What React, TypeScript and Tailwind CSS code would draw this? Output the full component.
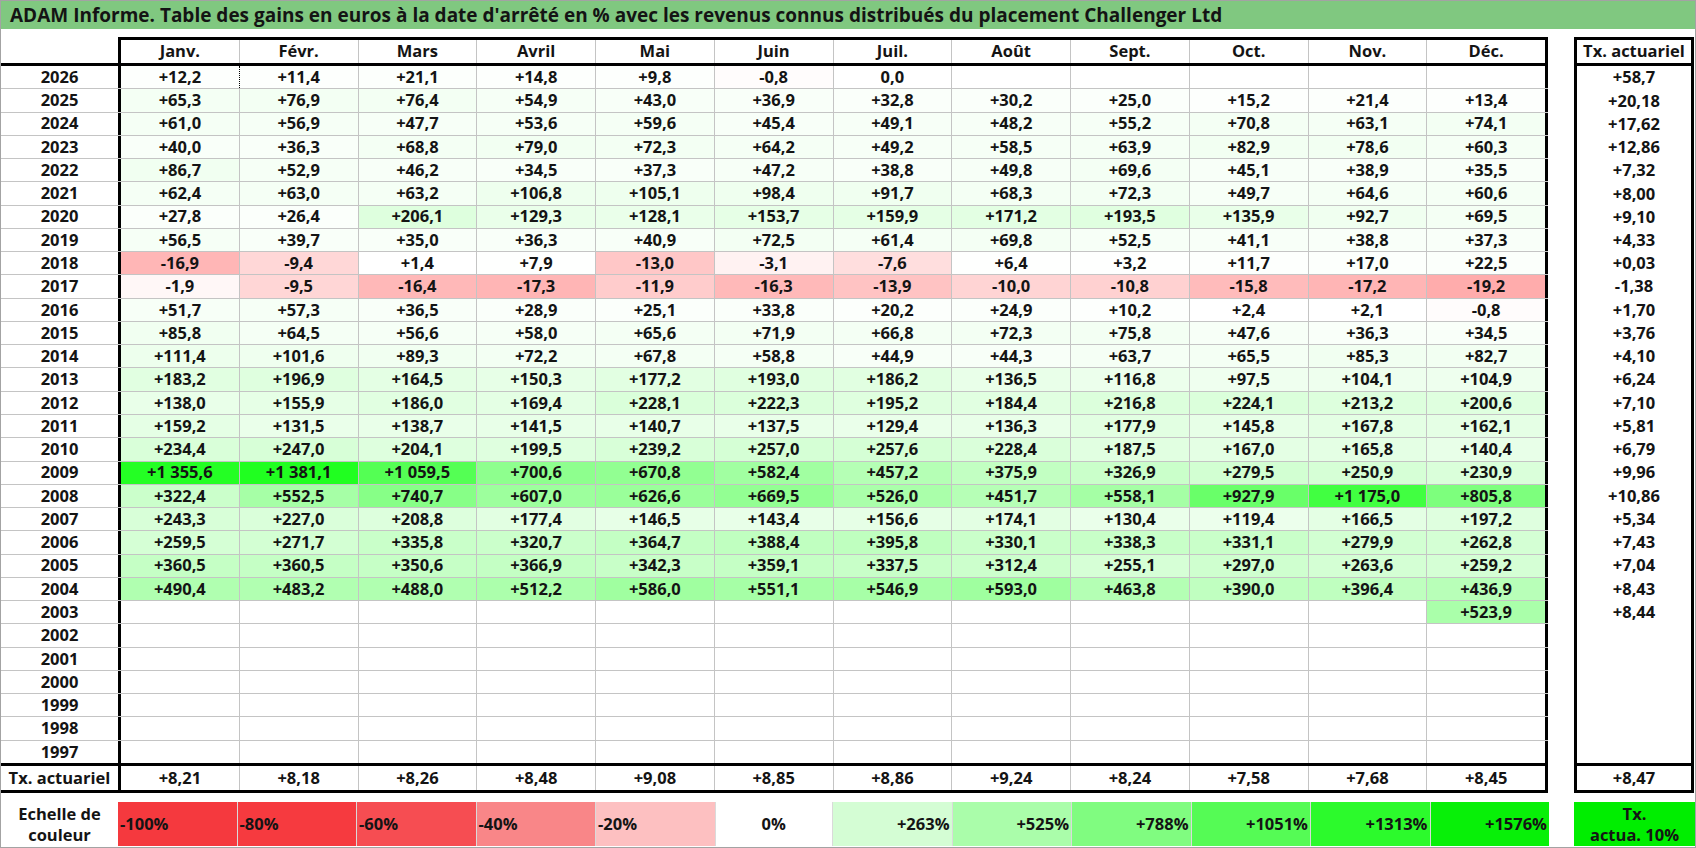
import React from "react";

type Row = [string, (string | null)[], string];

const months = ["Janv.", "Févr.", "Mars", "Avril", "Mai", "Juin", "Juil.", "Août", "Sept.", "Oct.", "Nov.", "Déc."];

const E = null;
const rows: Row[] = [
  ["2026", ["+12,2", "+11,4", "+21,1", "+14,8", "+9,8", "-0,8", "0,0", E, E, E, E, E], "+58,7"],
  ["2025", ["+65,3", "+76,9", "+76,4", "+54,9", "+43,0", "+36,9", "+32,8", "+30,2", "+25,0", "+15,2", "+21,4", "+13,4"], "+20,18"],
  ["2024", ["+61,0", "+56,9", "+47,7", "+53,6", "+59,6", "+45,4", "+49,1", "+48,2", "+55,2", "+70,8", "+63,1", "+74,1"], "+17,62"],
  ["2023", ["+40,0", "+36,3", "+68,8", "+79,0", "+72,3", "+64,2", "+49,2", "+58,5", "+63,9", "+82,9", "+78,6", "+60,3"], "+12,86"],
  ["2022", ["+86,7", "+52,9", "+46,2", "+34,5", "+37,3", "+47,2", "+38,8", "+49,8", "+69,6", "+45,1", "+38,9", "+35,5"], "+7,32"],
  ["2021", ["+62,4", "+63,0", "+63,2", "+106,8", "+105,1", "+98,4", "+91,7", "+68,3", "+72,3", "+49,7", "+64,6", "+60,6"], "+8,00"],
  ["2020", ["+27,8", "+26,4", "+206,1", "+129,3", "+128,1", "+153,7", "+159,9", "+171,2", "+193,5", "+135,9", "+92,7", "+69,5"], "+9,10"],
  ["2019", ["+56,5", "+39,7", "+35,0", "+36,3", "+40,9", "+72,5", "+61,4", "+69,8", "+52,5", "+41,1", "+38,8", "+37,3"], "+4,33"],
  ["2018", ["-16,9", "-9,4", "+1,4", "+7,9", "-13,0", "-3,1", "-7,6", "+6,4", "+3,2", "+11,7", "+17,0", "+22,5"], "+0,03"],
  ["2017", ["-1,9", "-9,5", "-16,4", "-17,3", "-11,9", "-16,3", "-13,9", "-10,0", "-10,8", "-15,8", "-17,2", "-19,2"], "-1,38"],
  ["2016", ["+51,7", "+57,3", "+36,5", "+28,9", "+25,1", "+33,8", "+20,2", "+24,9", "+10,2", "+2,4", "+2,1", "-0,8"], "+1,70"],
  ["2015", ["+85,8", "+64,5", "+56,6", "+58,0", "+65,6", "+71,9", "+66,8", "+72,3", "+75,8", "+47,6", "+36,3", "+34,5"], "+3,76"],
  ["2014", ["+111,4", "+101,6", "+89,3", "+72,2", "+67,8", "+58,8", "+44,9", "+44,3", "+63,7", "+65,5", "+85,3", "+82,7"], "+4,10"],
  ["2013", ["+183,2", "+196,9", "+164,5", "+150,3", "+177,2", "+193,0", "+186,2", "+136,5", "+116,8", "+97,5", "+104,1", "+104,9"], "+6,24"],
  ["2012", ["+138,0", "+155,9", "+186,0", "+169,4", "+228,1", "+222,3", "+195,2", "+184,4", "+216,8", "+224,1", "+213,2", "+200,6"], "+7,10"],
  ["2011", ["+159,2", "+131,5", "+138,7", "+141,5", "+140,7", "+137,5", "+129,4", "+136,3", "+177,9", "+145,8", "+167,8", "+162,1"], "+5,81"],
  ["2010", ["+234,4", "+247,0", "+204,1", "+199,5", "+239,2", "+257,0", "+257,6", "+228,4", "+187,5", "+167,0", "+165,8", "+140,4"], "+6,79"],
  ["2009", ["+1 355,6", "+1 381,1", "+1 059,5", "+700,6", "+670,8", "+582,4", "+457,2", "+375,9", "+326,9", "+279,5", "+250,9", "+230,9"], "+9,96"],
  ["2008", ["+322,4", "+552,5", "+740,7", "+607,0", "+626,6", "+669,5", "+526,0", "+451,7", "+558,1", "+927,9", "+1 175,0", "+805,8"], "+10,86"],
  ["2007", ["+243,3", "+227,0", "+208,8", "+177,4", "+146,5", "+143,4", "+156,6", "+174,1", "+130,4", "+119,4", "+166,5", "+197,2"], "+5,34"],
  ["2006", ["+259,5", "+271,7", "+335,8", "+320,7", "+364,7", "+388,4", "+395,8", "+330,1", "+338,3", "+331,1", "+279,9", "+262,8"], "+7,43"],
  ["2005", ["+360,5", "+360,5", "+350,6", "+366,9", "+342,3", "+359,1", "+337,5", "+312,4", "+255,1", "+297,0", "+263,6", "+259,2"], "+7,04"],
  ["2004", ["+490,4", "+483,2", "+488,0", "+512,2", "+586,0", "+551,1", "+546,9", "+593,0", "+463,8", "+390,0", "+396,4", "+436,9"], "+8,43"],
  ["2003", [E, E, E, E, E, E, E, E, E, E, E, "+523,9"], "+8,44"],
  ["2002", [E, E, E, E, E, E, E, E, E, E, E, E], ""],
  ["2001", [E, E, E, E, E, E, E, E, E, E, E, E], ""],
  ["2000", [E, E, E, E, E, E, E, E, E, E, E, E], ""],
  ["1999", [E, E, E, E, E, E, E, E, E, E, E, E], ""],
  ["1998", [E, E, E, E, E, E, E, E, E, E, E, E], ""],
  ["1997", [E, E, E, E, E, E, E, E, E, E, E, E], ""],
];

const txRow = ["+8,21", "+8,18", "+8,26", "+8,48", "+9,08", "+8,85", "+8,86", "+9,24", "+8,24", "+7,58", "+7,68", "+8,45"];

const legend: { label: string; bg: string; align: string }[] = [
  { label: "-100%", bg: "#f5393e", align: "justify-start pl-[2px]" },
  { label: "-80%", bg: "#f63a3f", align: "justify-start pl-[2px]" },
  { label: "-60%", bg: "#f64d52", align: "justify-start pl-[2px]" },
  { label: "-40%", bg: "#f98688", align: "justify-start pl-[2px]" },
  { label: "-20%", bg: "#fdc0c1", align: "justify-start pl-[2px]" },
  { label: "0%", bg: "#ffffff", align: "justify-center" },
  { label: "+263%", bg: "#d4fdd4", align: "justify-end pr-[2px]" },
  { label: "+525%", bg: "#aafdaa", align: "justify-end pr-[2px]" },
  { label: "+788%", bg: "#80fc80", align: "justify-end pr-[2px]" },
  { label: "+1051%", bg: "#55fb55", align: "justify-end pr-[2px]" },
  { label: "+1313%", bg: "#2cfa2c", align: "justify-end pr-[2px]" },
  { label: "+1576%", bg: "#08f008", align: "justify-end pr-[2px]" },
];

function cellBg(s: string | null): string | undefined {
  if (!s) return undefined;
  const v = parseFloat(s.replace(/\s/g, "").replace(",", "."));
  if (v > 0) {
    const t = Math.min(1, v / 1576);
    const c = Math.round(255 * (1 - t));
    return `rgb(${c},255,${c})`;
  }
  if (v < 0) {
    const c = Math.round(255 - Math.min(255, -v * 4.3));
    return `rgb(255,${c},${c})`;
  }
  return undefined;
}

export default function App() {
  return (
    <div className="w-[1696px] h-[848px] bg-white border border-[#a3a3a3] overflow-hidden font-bold text-[#141414] [font-family:'Open_Sans',sans-serif]">
      <div className="h-[28px] bg-[#80c880] flex items-center pl-[9px] text-[19px] leading-none whitespace-nowrap">
        ADAM Informe. Table des gains en euros à la date d'arrêté en % avec les revenus connus distribués du placement Challenger Ltd
      </div>

      <div className="mt-[8px] flex text-[16.5px] leading-none">
        {/* Main table */}
        <div className="w-[1547px] flex flex-col">
          {/* header */}
          <div className="h-[29px] flex border-b-[3px] border-black">
            <div className="w-[117px]" />
            <div className="flex-1 flex border-t-[3px] border-x-[3px] border-black">
              {months.map((m, i) => (
                <div
                  key={m}
                  className={`flex-1 basis-0 flex items-center justify-center ${i < 11 ? "border-r border-[#c4c4c4]" : ""}`}
                >
                  {m}
                </div>
              ))}
            </div>
          </div>
          {/* data */}
          <div className="h-[700px] flex flex-col border-b-[3px] border-black">
            {rows.map(([year, vals], ri) => (
              <div
                key={year}
                className={`flex-1 min-h-0 flex ${ri < rows.length - 1 ? "border-b border-[#c4c4c4]" : ""}`}
              >
                <div className="w-[117px] flex items-center justify-center">{year}</div>
                <div className="flex-1 flex border-x-[3px] border-black">
                  {vals.map((v, i) => {
                    const dotted = ri === 0 && i === 0;
                    return (
                      <div
                        key={i}
                        className={`flex-1 basis-0 flex items-center justify-center ${
                          i < 11 ? (dotted ? "border-r border-dotted border-black" : "border-r border-[#c4c4c4]") : ""
                        }`}
                        style={{ backgroundColor: cellBg(v) }}
                      >
                        {v ?? ""}
                      </div>
                    );
                  })}
                </div>
              </div>
            ))}
          </div>
          {/* tx row */}
          <div className="h-[27px] flex border-b-[3px] border-black">
            <div className="w-[117px] flex items-center justify-center whitespace-nowrap">Tx. actuariel</div>
            <div className="flex-1 flex border-x-[3px] border-black">
              {txRow.map((v, i) => (
                <div
                  key={i}
                  className={`flex-1 basis-0 flex items-center justify-center ${i < 11 ? "border-r border-[#c4c4c4]" : ""}`}
                >
                  {v}
                </div>
              ))}
            </div>
          </div>
        </div>

        {/* Tx actuariel box */}
        <div className="ml-[26px] w-[120px] h-[756px] border-[3px] border-black flex flex-col">
          <div className="h-[26px] shrink-0 border-b-[3px] border-black flex items-center justify-center whitespace-nowrap">
            Tx. actuariel
          </div>
          <div className="h-[697px] shrink-0 flex flex-col">
            {rows.map(([year, , tx]) => (
              <div key={year} className="flex-1 min-h-0 flex items-center justify-center">
                {tx}
              </div>
            ))}
          </div>
          <div className="h-[27px] shrink-0 border-t-[3px] border-black flex items-center justify-center">+8,47</div>
        </div>
      </div>

      {/* legend */}
      <div className="mt-[9px] h-[44px] flex text-[16.5px] leading-none">
        <div className="w-[117px] flex flex-col items-center justify-center leading-[21px]">
          <span>Echelle de</span>
          <span>couleur</span>
        </div>
        <div className="w-[1431px] flex">
          {legend.map((l, i) => (
            <div
              key={l.label}
              className={`flex-1 basis-0 flex items-center ${l.align} ${i < 11 ? "border-r border-[#dadada]" : ""}`}
              style={{ backgroundColor: l.bg }}
            >
              {l.label}
            </div>
          ))}
        </div>
        <div className="ml-[25px] w-[121px] bg-[#00ee00] flex flex-col items-center justify-center leading-[21px]">
          <span>Tx.</span>
          <span>actua. 10%</span>
        </div>
      </div>
    </div>
  );
}
